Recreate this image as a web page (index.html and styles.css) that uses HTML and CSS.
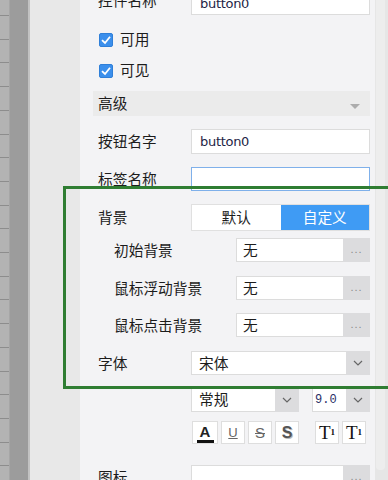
FILE: index.html
```html
<!DOCTYPE html>
<html lang="zh-CN">
<head>
    <meta charset="UTF-8">
    <meta name="viewport" content="width=device-width, initial-scale=1.0">
    <title>属性面板</title>
    <link rel="stylesheet" href="styles.css">
</head>
<body>

<div class="screen">
    <div class="ruler"></div>
    <div class="gutter"></div>
    <div class="gap"></div>

    <div class="panel">
        <div class="row first">
            <div class="label">控件名称</div>
            <div class="field"><span class="val en">button0</span></div>
        </div>

        <div class="check-row">
            <span class="check"><svg viewBox="0 0 14 14" width="14" height="14"><path d="M3 7.2 L6 10 L11 3.8" fill="none" stroke="#fff" stroke-width="1.8"/></svg></span>
            <span>可用</span>
        </div>
        <div class="check-row">
            <span class="check"><svg viewBox="0 0 14 14" width="14" height="14"><path d="M3 7.2 L6 10 L11 3.8" fill="none" stroke="#fff" stroke-width="1.8"/></svg></span>
            <span>可见</span>
        </div>

        <div class="section">
            <span>高级</span>
            <span class="tri"></span>
        </div>

        <div class="row r-name">
            <div class="label">按钮名字</div>
            <div class="field"><span class="val en">button0</span></div>
        </div>
        <div class="row r-tag">
            <div class="label">标签名称</div>
            <div class="field focus"></div>
        </div>

        <div class="row r-bg">
            <div class="label">背景</div>
            <div class="seg">
                <span class="seg-item">默认</span>
                <span class="seg-item on">自定义</span>
            </div>
        </div>

        <div class="row sub r-pick">
            <div class="label">初始背景</div>
            <div class="field"><span class="val">无</span><span class="more">...</span></div>
        </div>
        <div class="row sub r-pick">
            <div class="label">鼠标浮动背景</div>
            <div class="field"><span class="val">无</span><span class="more">...</span></div>
        </div>
        <div class="row sub r-pick">
            <div class="label">鼠标点击背景</div>
            <div class="field"><span class="val">无</span><span class="more">...</span></div>
        </div>

        <div class="row r-font">
            <div class="label">字体</div>
            <div class="field"><span class="val">宋体</span><span class="drop"><svg width="10" height="6" viewBox="0 0 10 6"><path d="M1 1 L5 5 L9 1" fill="none" stroke="#666" stroke-width="1.2"/></svg></span></div>
        </div>

        <div class="row r-style">
            <div class="label"></div>
            <div class="field w-style"><span class="val">常规</span><span class="drop"><svg width="10" height="6" viewBox="0 0 10 6"><path d="M1 1 L5 5 L9 1" fill="none" stroke="#666" stroke-width="1.2"/></svg></span></div>
            <div class="field w-size"><span class="val mono">9.0</span><span class="drop"><svg width="10" height="6" viewBox="0 0 10 6"><path d="M1 1 L5 5 L9 1" fill="none" stroke="#666" stroke-width="1.2"/></svg></span></div>
        </div>

        <div class="row r-fmt">
            <div class="label"></div>
            <div class="fmt">
                <span class="btn color">A</span>
                <span class="btn under">U</span>
                <span class="btn strike">S</span>
                <span class="btn shadow">S</span>
            </div>
            <div class="fmt script">
                <span class="btn serif">T<sup>1</sup></span>
                <span class="btn serif">T<sub>1</sub></span>
            </div>
        </div>

        <div class="row r-icon">
            <div class="label">图标</div>
            <div class="field"><span class="val"></span><span class="more">...</span></div>
        </div>
    </div>

    <div class="scroll"><div class="thumb"></div></div>

    <div class="highlight"></div>
</div>

</body>
</html>
```

FILE: styles.css
```css
* { margin: 0; padding: 0; box-sizing: border-box; }
body { width: 388px; height: 480px; overflow: hidden; background: #e8e8e8; font-family: "Noto Sans CJK SC", "Noto Sans", sans-serif; font-size: 14.7px; color: #1c1c1c; }

.screen { position: relative; display: flex; width: 388px; height: 480px; overflow: hidden; }
.ruler { width: 10px; flex-shrink: 0; background: repeating-linear-gradient(to bottom, #b3b3b3 0 15px, #8d8d8d 15px 16px, #b3b3b3 16px 23.7px); border-right: 1px solid #a6a6a6; }
.gutter { width: 20px; flex-shrink: 0; background: #9c9c9c; border-right: 2px solid #c2c2c2; }
.gap { width: 50px; flex-shrink: 0; background: #e8e8e8; }
.panel { width: 295px; flex-shrink: 0; background: #f3f3f5; padding: 0 5px 0 13px; display: flex; flex-direction: column; }
.panel > * { flex-shrink: 0; }
.scroll { flex: 1; background: #e6e6e6; padding-left: 1px; }
.thumb { width: 9px; height: 470px; background: #ededed; border-radius: 0 0 4px 4px; }

.row { display: flex; align-items: center; height: 25px; }
.label { width: 98px; padding-left: 5px; line-height: 1; white-space: nowrap; flex-shrink: 0; }
.sub .label { width: 143px; padding-left: 21px; }
.field { flex: 1; min-width: 0; height: 100%; display: flex; align-items: stretch; background: #fff; border: 1px solid #dcdcdc; }
.field.focus { border-color: #7fb0ea; }
.val { flex: 1; min-width: 0; display: flex; align-items: center; padding-left: 6px; line-height: 1; }
.en { font-family: "DejaVu Sans", sans-serif; font-size: 13px; color: #1e2546; letter-spacing: -0.3px; padding-left: 8px; }
.mono { font-family: "Liberation Mono", monospace; font-size: 12px; color: #2a2f66; padding-left: 2px; }
.more { flex: 0 0 27px; background: #dcdcde; color: #8a8a8a; display: flex; align-items: center; justify-content: center; font-family: "Liberation Sans", sans-serif; font-size: 11px; letter-spacing: 1px; padding-bottom: 3px; margin: -1px -1px -1px 0; }
.drop { flex: 0 0 24px; background: #dcdcde; display: flex; align-items: center; justify-content: center; margin: -1px -1px -1px 0; }

.first { margin-top: -9px; height: 24px; }
.first .label { margin-top: -6px; }

.check-row { display: flex; align-items: center; height: 31px; padding-left: 6px; gap: 7px; line-height: 1; }
.first + .check-row { margin-top: 9px; }
.check { width: 14px; height: 14px; background: #3b8fec; border: 1px solid #2f7fd8; border-radius: 2px; display: flex; }
.check svg { margin: -1px; }

.section { margin-top: 5px; height: 25px; background: #ebebeb; display: flex; align-items: center; justify-content: space-between; padding: 0 10px 0 5px; line-height: 1; }
.tri { width: 0; height: 0; border-left: 5px solid transparent; border-right: 5px solid transparent; border-top: 5px solid #acacac; margin-top: 6px; }

.r-name { margin-top: 13px; }
.r-tag { margin-top: 13px; height: 24px; }
.r-bg { margin-top: 13px; height: 27px; }
.seg { flex: 1; height: 100%; display: flex; border: 1px solid #e0e0e0; background: #fff; }
.seg-item { flex: 1; display: flex; align-items: center; justify-content: center; line-height: 1; }
.seg-item.on { background: #3f9bf4; color: #fff; }

.r-pick { margin-top: 7px; height: 24px; }
.r-pick + .r-pick { margin-top: 14px; }
.r-pick + .r-pick + .r-pick { margin-top: 13px; }

.r-font { margin-top: 14px; height: 24px; }
.r-font .val { padding-left: 7px; }
.r-style { margin-top: 12px; }
.w-style { flex: 0 0 108px; }
.w-size { flex: 0 0 58px; margin-left: 13px; }
.w-style .val { padding-left: 7px; }

.r-fmt { margin-top: 9px; height: 23px; }
.r-fmt .label { width: 99px; }
.fmt { display: flex; gap: 3px; height: 100%; }
.fmt.script { margin-left: 16px; }
.btn { width: 24px; height: 23px; background: #fff; border: 1px solid #dedede; display: flex; align-items: center; justify-content: center; font-family: "Liberation Sans", sans-serif; font-weight: bold; font-size: 14px; color: #666; line-height: 1; }
.btn.color { width: 26px; flex-direction: column; color: #222; font-size: 15px; padding-top: 2px; }
.btn.color::after { content: ""; width: 17px; height: 4px; background: #111; margin-top: 1px; }
.btn.under { text-decoration: underline; font-weight: normal; font-size: 13px; }
.btn.strike { text-decoration: line-through; font-weight: normal; font-size: 15px; }
.btn.shadow { font-size: 16px; color: #555; text-shadow: 1px 1px 0 #bbb; }
.btn.serif { font-family: "Liberation Serif", serif; font-weight: normal; color: #111; font-size: 19px; }
.btn.serif sup { font-size: 9px; font-weight: bold; vertical-align: 6px; }
.btn.serif sub { font-size: 9px; font-weight: bold; vertical-align: -3px; }

.r-icon { margin-top: 21px; }

.highlight { position: absolute; left: 63px; top: 186px; width: 328px; height: 203px; border: 3px solid #2f7d32; }
```
